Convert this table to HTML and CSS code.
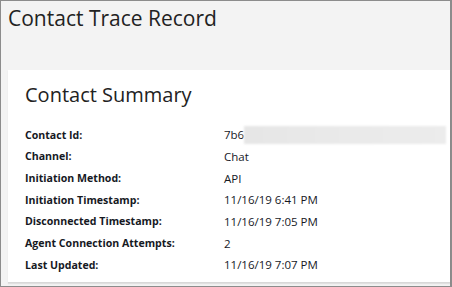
FILE: index.html
```html
<!DOCTYPE html>
<html>
<head>
<meta charset="utf-8">
<link rel="stylesheet" href="styles.css">
</head>
<body>
<div class="frame">
  <h1 class="page-title">Contact Trace Record</h1>
  <div class="card">
    <h2 class="card-title">Contact Summary</h2>
    <div class="rows">
      <div class="row"><span class="label">Contact Id:</span><span class="value">7b6<span class="blur"></span></span></div>
      <div class="row"><span class="label">Channel:</span><span class="value">Chat</span></div>
      <div class="row"><span class="label">Initiation Method:</span><span class="value">API</span></div>
      <div class="row"><span class="label">Initiation Timestamp:</span><span class="value">11/16/19 6:41 PM</span></div>
      <div class="row"><span class="label">Disconnected Timestamp:</span><span class="value">11/16/19 7:05 PM</span></div>
      <div class="row"><span class="label">Agent Connection Attempts:</span><span class="value">2</span></div>
      <div class="row"><span class="label">Last Updated:</span><span class="value">11/16/19 7:07 PM</span></div>
    </div>
  </div>
</div>
</body>
</html>
```
FILE: styles.css
```css
html, body { margin: 0; padding: 0; }
body {
  width: 452px;
  height: 287px;
  overflow: hidden;
  font-family: "Open Sans", "Noto Sans", sans-serif;
  color: #16191f;
}
.frame {
  box-sizing: border-box;
  width: 452px;
  height: 287px;
  border: 1px solid #8c8c8c;
  border-right-width: 2px;
  background: #f3f3f3;
  padding: 0 0 0 7px;
  display: flex;
  flex-direction: column;
}
.page-title {
  margin: 0;
  font-size: 21px;
  font-weight: 400;
  line-height: 34px;
  height: 69px;
  color: #222;
}
.card {
  background: #fff;
  border-bottom: 1px solid #d8d8d8;
  box-shadow: 0 1px 1px rgba(0,0,0,0.08);
  padding: 10px 0 0 17px;
  height: 213px;
  box-sizing: border-box;
}
.card-title {
  margin: 0 0 14px 0;
  font-size: 20px;
  font-weight: 400;
  line-height: 30px;
  color: #222;
}
.rows { display: flex; flex-direction: column; }
.row {
  display: flex;
  height: 21.67px;
  align-items: center;
}
.label { width: 199px; font-weight: 700; font-size: 10.6px; color: #16191f; }
.value { color: #16191f; display: flex; align-items: center; font-size: 11.5px; }
.blur {
  display: inline-block;
  width: 202px;
  height: 18px;
  background: linear-gradient(90deg, #e6e6e6, #eaeaea 50%, #ececec);
  filter: blur(1px);
}
```
